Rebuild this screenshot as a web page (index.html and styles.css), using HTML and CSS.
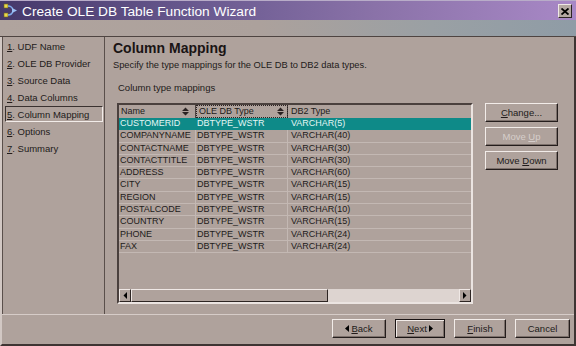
FILE: index.html
```html
<!DOCTYPE html>
<html>
<head>
<meta charset="utf-8">
<link rel="stylesheet" href="styles.css">
</head>
<body>
<div class="window">
  <div class="titlebar">
    <svg class="appicon" width="16" height="16" viewBox="0 0 16 16">
      <rect x="1" y="1" width="4" height="4" fill="#e8d84a" stroke="#6a6020" stroke-width="0.6"/>
      <rect x="1" y="10" width="4" height="4" fill="#e8d84a" stroke="#6a6020" stroke-width="0.6"/>
      <path d="M5 3 Q9 3 10 7 M5 12 Q9 12 10 8" fill="none" stroke="#7fa8e8" stroke-width="1.4"/>
      <path d="M9 5 L14 7.5 L9 10 Z" fill="#9cc0f4"/>
    </svg>
    <span class="title">Create OLE DB Table Function Wizard</span>
    <span class="close">
      <svg width="8" height="7" viewBox="0 0 8 7"><path d="M0.5 0.5 L7.5 6.5 M7.5 0.5 L0.5 6.5" stroke="#000" stroke-width="1.8"/></svg>
    </span>
  </div>
  <div class="band"></div>
  <div class="frame">
    <div class="body">
      <nav class="steps">
        <div class="step"><u>1</u>. UDF Name</div>
        <div class="step"><u>2</u>. OLE DB Provider</div>
        <div class="step"><u>3</u>. Source Data</div>
        <div class="step"><u>4</u>. Data Columns</div>
        <div class="step current"><u>5</u>. Column Mapping</div>
        <div class="step"><u>6</u>. Options</div>
        <div class="step"><u>7</u>. Summary</div>
      </nav>
      <main class="page">
        <h1 class="heading">Column Mapping</h1>
        <p class="desc">Specify the type mappings for the OLE DB to DB2 data types.</p>
        <div class="label">Column type mappings</div>
        <div class="mapping">
          <div class="table">
            <div class="thead">
              <div class="th"><span>Name</span><svg class="sort" width="7" height="9" viewBox="0 0 7 9"><path d="M0 4 L3.5 0.5 L7 4 Z M0 5 L3.5 8.5 L7 5 Z" fill="#2a2222"/></svg></div>
              <div class="th focus"><span>OLE DB Type</span><svg class="sort" width="7" height="9" viewBox="0 0 7 9"><path d="M0 4 L3.5 0.5 L7 4 Z M0 5 L3.5 8.5 L7 5 Z" fill="#2a2222"/></svg></div>
              <div class="th last"><span>DB2 Type</span></div>
            </div>
            <div class="rows">
              <div class="tr selected"><div class="td">CUSTOMERID</div><div class="td">DBTYPE_WSTR</div><div class="td">VARCHAR(5)</div></div>
              <div class="tr"><div class="td">COMPANYNAME</div><div class="td">DBTYPE_WSTR</div><div class="td">VARCHAR(40)</div></div>
              <div class="tr"><div class="td">CONTACTNAME</div><div class="td">DBTYPE_WSTR</div><div class="td">VARCHAR(30)</div></div>
              <div class="tr"><div class="td">CONTACTTITLE</div><div class="td">DBTYPE_WSTR</div><div class="td">VARCHAR(30)</div></div>
              <div class="tr"><div class="td">ADDRESS</div><div class="td">DBTYPE_WSTR</div><div class="td">VARCHAR(60)</div></div>
              <div class="tr"><div class="td">CITY</div><div class="td">DBTYPE_WSTR</div><div class="td">VARCHAR(15)</div></div>
              <div class="tr"><div class="td">REGION</div><div class="td">DBTYPE_WSTR</div><div class="td">VARCHAR(15)</div></div>
              <div class="tr"><div class="td">POSTALCODE</div><div class="td">DBTYPE_WSTR</div><div class="td">VARCHAR(10)</div></div>
              <div class="tr"><div class="td">COUNTRY</div><div class="td">DBTYPE_WSTR</div><div class="td">VARCHAR(15)</div></div>
              <div class="tr"><div class="td">PHONE</div><div class="td">DBTYPE_WSTR</div><div class="td">VARCHAR(24)</div></div>
              <div class="tr"><div class="td">FAX</div><div class="td">DBTYPE_WSTR</div><div class="td">VARCHAR(24)</div></div>
            </div>
            <div class="hscroll">
              <div class="sbtn"><svg width="4" height="7" viewBox="0 0 4 7"><path d="M4 0 L0.5 3.5 L4 7 Z" fill="#000"/></svg></div>
              <div class="track"><div class="thumb"></div></div>
              <div class="sbtn"><svg width="4" height="7" viewBox="0 0 4 7"><path d="M0 0 L3.5 3.5 L0 7 Z" fill="#000"/></svg></div>
            </div>
          </div>
          <div class="side">
            <div class="btn"><span><u>C</u>hange...</span></div>
            <div class="btn disabled"><span>Move <u>U</u>p</span></div>
            <div class="btn"><span>Move <u>D</u>own</span></div>
          </div>
        </div>
      </main>
    </div>
    <footer class="footer">
      <div class="btn w-back"><svg class="arrow-l" width="4" height="7" viewBox="0 0 4 7"><path d="M4 0 L0 3.5 L4 7 Z" fill="#000"/></svg><span><u>B</u>ack</span></div>
      <div class="btn w-next default"><span><u>N</u>ext</span><svg class="arrow-r" width="4" height="7" viewBox="0 0 4 7"><path d="M0 0 L4 3.5 L0 7 Z" fill="#000"/></svg></div>
      <div class="btn w-finish"><span><u>F</u>inish</span></div>
      <div class="btn w-cancel"><span>Cancel</span></div>
    </footer>
  </div>
</div>
</body>
</html>
```

FILE: styles.css
```css
* { box-sizing: border-box; }
html, body { margin: 0; padding: 0; }
body {
  width: 576px;
  height: 346px;
  overflow: hidden;
  background: #afa29c;
  font-family: "Liberation Sans", Arial, sans-serif;
  color: #221b1a;
}
.window {
  width: 576px;
  height: 346px;
  display: flex;
  flex-direction: column;
  background: #afa29c;
}
.titlebar {
  height: 20px;
  flex: none;
  display: flex;
  align-items: flex-start;
  background: linear-gradient(90deg, #45386a 0%, #6a5a90 35%, #8a72a8 65%, #a888c6 100%);
  border-top: 1px solid #b8acc8;
}
.appicon { margin: 2px 0 0 3px; flex: none; }
.title {
  margin-left: 3px;
  padding-top: 2px;
  font-size: 13.7px;
  line-height: 18px;
  color: #ffffff;
  white-space: nowrap;
}
.close {
  margin: 3px 4px 0 auto;
  width: 14px;
  height: 14px;
  display: flex;
  align-items: center;
  justify-content: center;
  background: #b4a8a2;
  border: 1px solid;
  border-color: #efe8e5 #2d2523 #2d2523 #efe8e5;
}
.band {
  height: 17px;
  flex: none;
  background: linear-gradient(90deg, #b0a49e 0%, #aca19c 45%, #9aa0a4 75%, #8f9ca6 100%);
  border-bottom: 1px solid #4e4441;
}
.frame {
  flex: 1;
  display: flex;
  flex-direction: column;
  border-left: 2px solid #d2c8c4;
  border-right: 2px solid #3e3533;
  border-bottom: 2px solid #3e3533;
}
.body {
  height: 278px;
  flex: none;
  display: flex;
  border-bottom: 1px solid #d6ccc8;
}
.steps {
  width: 103px;
  flex: none;
  border-left: 1px solid #5a4f4b;
  border-right: 1px solid #5a4f4b;
  padding-top: 1px;
}
.step {
  height: 17px;
  margin: 0 1px 0 2px;
  padding-left: 1px;
  border: 1px solid transparent;
  font-size: 9.5px;
  line-height: 15px;
  white-space: nowrap;
}
.step.current {
  border-color: #3a3230 #f2ece9 #f2ece9 #3a3230;
  height: 16px;
  margin-bottom: 1px;
}
.page {
  flex: 1;
  padding: 3px 0 0 8px;
}
.heading {
  margin: 0;
  font-size: 14px;
  line-height: 16px;
  font-weight: bold;
  color: #1a1414;
}
.desc {
  margin: 3px 0 0 0;
  font-size: 9.3px;
  line-height: 12px;
}
.label {
  margin: 11px 0 0 5px;
  font-size: 9.5px;
  line-height: 12px;
}
.mapping {
  display: flex;
  align-items: flex-start;
  margin: 9px 0 0 4px;
  gap: 12px;
}
.table {
  width: 356px;
  height: 201px;
  display: flex;
  flex-direction: column;
  border: 2px solid;
  border-color: #4a403d #ebe4e1 #ebe4e1 #4a403d;
}
.thead {
  height: 13px;
  flex: none;
  display: grid;
  grid-template-columns: 77px 92px 1fr;
  font-size: 9px;
}
.th {
  display: flex;
  align-items: center;
  justify-content: space-between;
  padding: 0 6px 0 2px;
  border-right: 1px solid #4e4441;
  line-height: 11px;
  white-space: nowrap;
}
.th.focus {
  outline: 1px dotted #2a2222;
  outline-offset: -1px;
  padding-left: 3px;
  padding-right: 3px;
}
.th.last { border-right: none; padding-left: 3px; }
.sort { flex: none; }
.rows {
  flex: 1;
  display: grid;
  grid-auto-rows: 12.3px;
  align-content: start;
  font-size: 9px;
}
.tr {
  display: grid;
  grid-template-columns: 77px 92px 1fr;
  border-bottom: 1px solid #c3b8b3;
}
.td {
  padding-left: 1px;
  line-height: 11.3px;
  white-space: nowrap;
  overflow: hidden;
  border-right: 1px solid #c3b8b3;
}
.td:last-child { border-right: none; padding-left: 3px; }
.tr.selected {
  background: #0e8a88;
  color: #e4f6f4;
  border-bottom-color: #0e8a88;
}
.tr.selected .td { border-right-color: #0e8a88; }
.hscroll {
  height: 13px;
  flex: none;
  display: flex;
}
.sbtn {
  width: 12px;
  flex: none;
  display: flex;
  align-items: center;
  justify-content: center;
  background: #afa29c;
  border: 1px solid;
  border-color: #efe8e5 #2d2523 #2d2523 #efe8e5;
}
.track {
  flex: 1;
  background: #ddd4d0;
  display: flex;
}
.thumb {
  width: 197px;
  background: #afa29c;
  border: 1px solid;
  border-color: #efe8e5 #2d2523 #2d2523 #efe8e5;
}
.side {
  width: 73px;
  display: flex;
  flex-direction: column;
  gap: 5px;
}
.btn {
  height: 19px;
  display: flex;
  align-items: center;
  justify-content: center;
  background: #afa29c;
  border: 1px solid;
  border-color: #f2ece9 #241d1c #241d1c #f2ece9;
  box-shadow: inset -1px -1px 0 #7c706b;
  font-size: 9.5px;
  white-space: nowrap;
}
.arrow-l { margin-right: 2px; }
.arrow-r { margin-left: 2px; }
.btn.disabled { color: #d6cecb; }
.btn.default {
  border-color: #1a1414;
  box-shadow: inset 1px 1px 0 #f2ece9, inset -1px -1px 0 #7c706b;
}
.footer {
  flex: 1;
  display: flex;
  justify-content: flex-end;
  align-items: flex-start;
  gap: 9px;
  padding: 4px 4px 0 0;
}
.w-back { width: 54px; }
.w-next { width: 50px; }
.w-finish { width: 52px; }
.w-cancel { width: 55px; }
```
